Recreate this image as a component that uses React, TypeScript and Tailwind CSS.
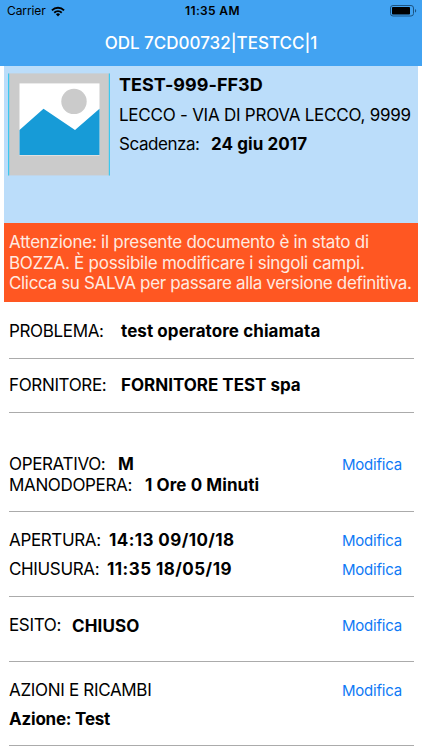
import type { ReactNode } from "react";

const Field = ({ label, labelClass, value, valueClass }: {
  label: string;
  labelClass: string;
  value: string;
  valueClass: string;
}) => (
  <p className="flex h-5 items-center whitespace-nowrap text-[17px] leading-5">
    <span className={`shrink-0 tracking-[-0.35px] ${labelClass}`}>{label}</span>
    <span className={`font-bold ${valueClass}`}>{value}</span>
  </p>
);

const EditButton = () => (
  <button className="mr-3 mt-px h-5 shrink-0 text-[15px] leading-5 tracking-[-0.2px] text-[#0f7af5]">
    Modifica
  </button>
);

const Section = ({ className, children }: { className: string; children: ReactNode }) => (
  <section className={`ml-[9px] mr-2 border-b border-[#ababab] ${className}`}>
    {children}
  </section>
);

const StatusBar = () => (
  <div className="grid h-[22px] grid-cols-3 items-center pl-[7px] pr-[5px] text-black">
    <div className="flex items-center gap-[5px]">
      <span className="text-[12px] leading-4 tracking-[-0.1px]">Carrier</span>
      <svg width="14" height="11" viewBox="0 0 15 11" fill="none" stroke="currentColor" strokeWidth="2">
        <path d="M1 4.2a9.2 9.2 0 0 1 13 0" />
        <path d="M3.5 6.8a5.7 5.7 0 0 1 8 0" />
        <path d="M7.5 10.8 5.3 8.5a3.1 3.1 0 0 1 4.4 0z" fill="currentColor" stroke="none" />
      </svg>
    </div>
    <span className="pl-px text-center text-[12px] font-semibold leading-4 tracking-[0.35px]">11:35 AM</span>
    <svg className="justify-self-end" width="27" height="12" viewBox="0 0 27 12">
      <rect x="0.5" y="0.5" width="23" height="10.5" rx="2.5" fill="none" stroke="#1c5482" />
      <rect x="2" y="2" width="18" height="7.5" rx="0.8" fill="#000" />
      <path d="M25 4c1.6.4 1.6 3.2 0 3.6z" fill="#1c5482" />
    </svg>
  </div>
);

const Thumbnail = () => (
  <svg className="shrink-0" width="102" height="103" viewBox="0 -0.4 102 103">
    <rect width="102" height="102" fill="#cbcbcb" />
    <path d="M0.6 0v102M101.4 0v102" stroke="#3cc8f0" strokeWidth="1.2" />
    <rect x="11.5" y="10" width="80" height="72" fill="#fff" />
    <circle cx="66" cy="28" r="12.7" fill="#cbcbcb" />
    <path d="M11.5 56.5 35.5 35.3 67 56.5 91.5 35.3V81.7H11.5z" fill="#179bd7" />
  </svg>
);

const App = () => {
  return (
    <div className="h-[750px] w-[422px] overflow-hidden bg-white font-['Inter',sans-serif] text-black">
      <header className="h-[66px] bg-[#42a3f2]">
        <StatusBar />
        <h1 className="flex h-[42px] items-center justify-center text-[17px] font-medium leading-5 text-white">
          ODL 7CD00732|TESTCC|1
        </h1>
      </header>

      <div className="ml-1 mr-[4.5px]">
        <div className="flex h-[157px] bg-[#bbddfa] pl-1 pt-[7px]">
          <Thumbnail />
          <div className="ml-[9px] mt-[2px] whitespace-nowrap text-[17px] leading-5">
            <h2 className="text-[18px] font-bold tracking-[0.02px]">TEST-999-FF3D</h2>
            <p className="mt-[10px] tracking-[-0.24px]">LECCO - VIA DI PROVA LECCO, 9999</p>
            <p className="mt-[9px] flex">
              <span className="w-[92px] shrink-0 tracking-[-0.45px]">Scadenza:</span>
              <span className="font-bold tracking-[0.08px]">24 giu 2017</span>
            </p>
          </div>
        </div>
        <p className="h-[79px] whitespace-nowrap bg-[#ff5722] pl-[5px] pt-[9px] text-[17px] leading-[20.5px] tracking-[-0.26px] text-[#ffeae0]">
          Attenzione: il presente documento è in stato di<br />
          BOZZA. È possibile modificare i singoli campi.<br />
          <span className="tracking-[-0.34px]">Clicca su SALVA per passare alla versione definitiva.</span>
        </p>
      </div>

      <Section className="h-[57px] pt-[19px]">
        <Field label="PROBLEMA:" labelClass="w-[112px]" value="test operatore chiamata" valueClass="tracking-[0.08px]" />
      </Section>
      <Section className="h-[54px] pt-4">
        <Field label="FORNITORE:" labelClass="w-[112px]" value="FORNITORE TEST spa" valueClass="tracking-[-0.01px]" />
      </Section>
      <Section className="flex h-[99px] justify-between pt-[41px]">
        <div className="flex flex-col gap-px">
          <Field label="OPERATIVO:" labelClass="w-[109px]" value="M" valueClass="" />
          <Field label="MANODOPERA:" labelClass="w-[136px]" value="1 Ore 0 Minuti" valueClass="tracking-[0.09px]" />
        </div>
        <EditButton />
      </Section>
      <Section className="flex h-[85px] flex-col gap-2 pt-[18px]">
        <div className="flex justify-between">
          <Field label="APERTURA:" labelClass="w-[100px]" value="14:13 09/10/18" valueClass="tracking-[0.42px]" />
          <EditButton />
        </div>
        <div className="flex justify-between">
          <Field label="CHIUSURA:" labelClass="w-[98px]" value="11:35 18/05/19" valueClass="tracking-[0.46px]" />
          <EditButton />
        </div>
      </Section>
      <Section className="flex h-[65px] justify-between pt-[18px]">
        <Field label="ESITO:" labelClass="w-[63px]" value="CHIUSO" valueClass="pt-[2px] tracking-[0.15px]" />
        <EditButton />
      </Section>
      <Section className="h-[84px] pt-[18px] text-[17px] leading-5">
        <div className="flex justify-between">
          <h3 className="tracking-[-0.32px]">AZIONI E RICAMBI</h3>
          <EditButton />
        </div>
        <p className="mt-2 font-bold tracking-[-0.22px]">Azione: Test</p>
      </Section>
    </div>
  );
};

export default App;
